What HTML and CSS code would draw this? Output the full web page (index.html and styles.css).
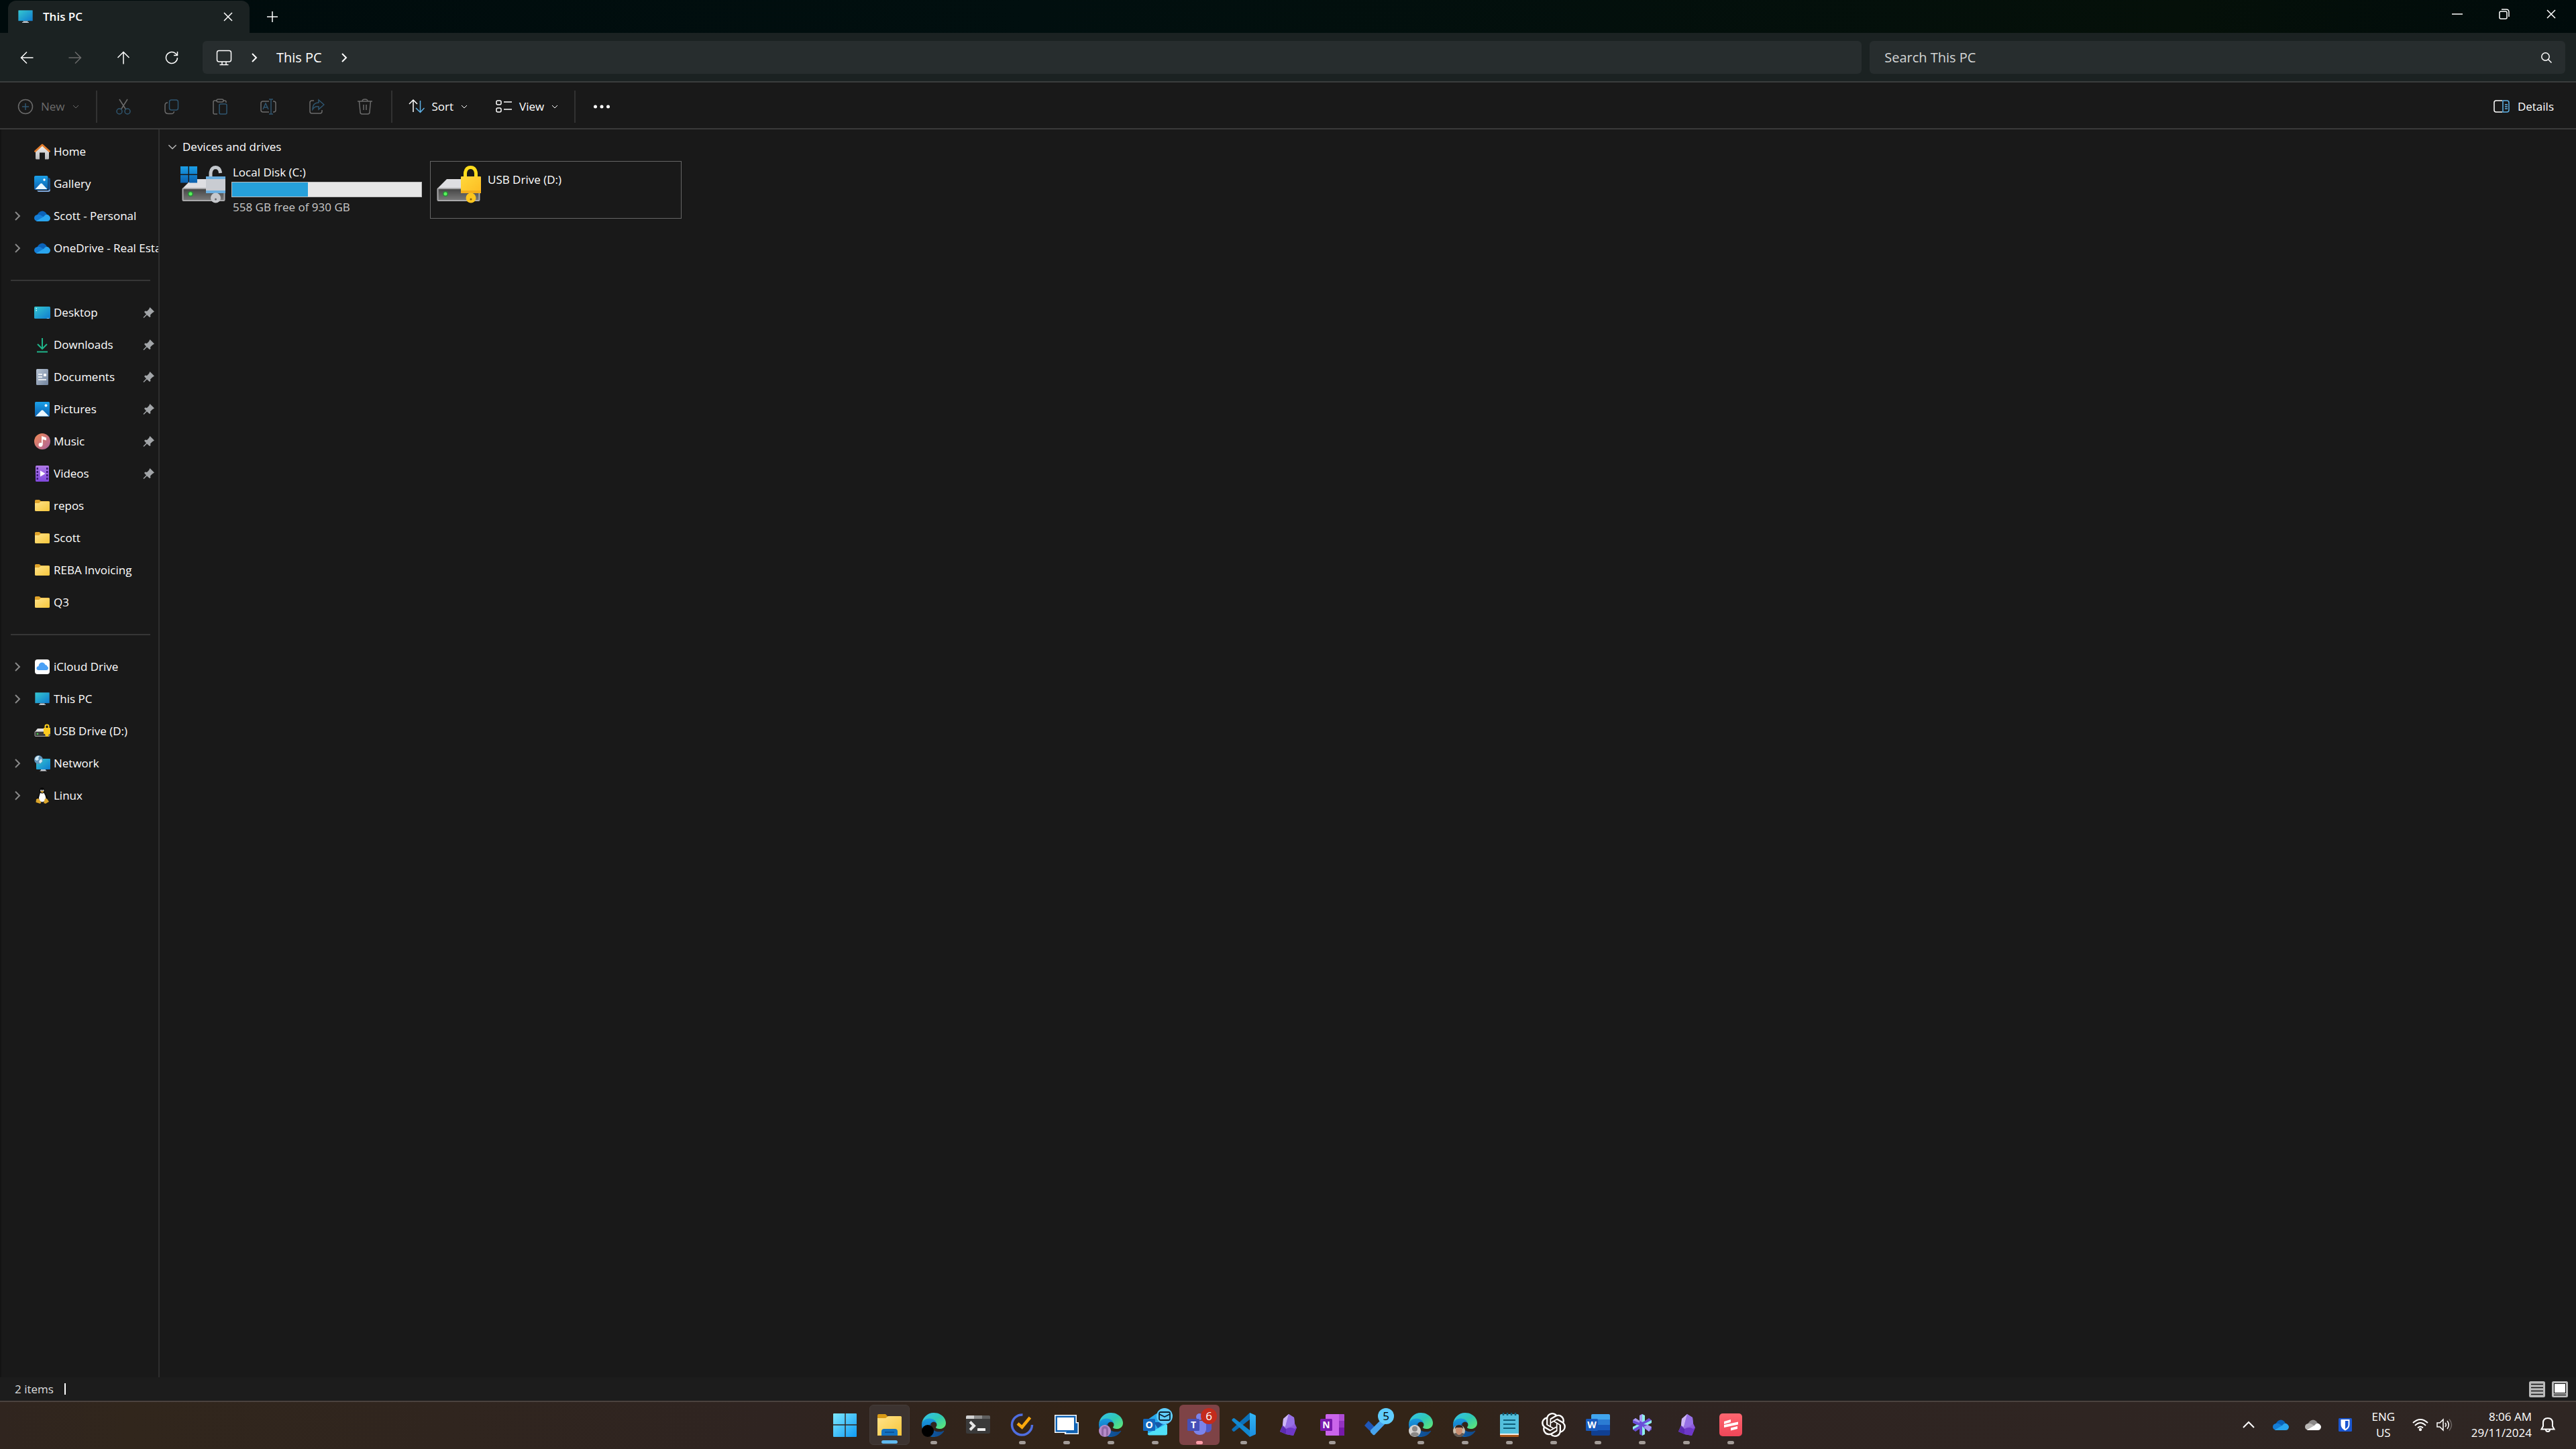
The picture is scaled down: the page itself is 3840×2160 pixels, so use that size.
FILE: index.html
```html
<!DOCTYPE html>
<html lang="en">
<head>
    <meta charset="UTF-8">
    <meta name="viewport" content="width=device-width, initial-scale=1.0">
    <title>This PC</title>
    <link rel="stylesheet" href="styles.css">
</head>
<body>
    <header class="titlebar">
        <div class="tab">
            <svg class="icon"><use href="#pc"/></svg>
            <span class="tab-title">This PC</span>
            <button class="tab-close" aria-label="Close tab"><svg class="glyph"><use href="#close"/></svg></button>
        </div>
        <button class="tab-new" aria-label="New tab"><svg class="glyph"><use href="#plus"/></svg></button>
        <div class="window-buttons">
            <button aria-label="Minimize"><svg class="glyph"><use href="#minimize"/></svg></button>
            <button aria-label="Restore"><svg class="glyph"><use href="#restore"/></svg></button>
            <button aria-label="Close"><svg class="glyph"><use href="#close"/></svg></button>
        </div>
    </header>

    <div class="navbar">
        <button class="nav-button" aria-label="Back"><svg class="icon"><use href="#back"/></svg></button>
        <button class="nav-button off" aria-label="Forward"><svg class="icon flip"><use href="#back"/></svg></button>
        <button class="nav-button" aria-label="Up"><svg class="icon"><use href="#up"/></svg></button>
        <button class="nav-button" aria-label="Refresh"><svg class="icon"><use href="#refresh"/></svg></button>
        <nav class="address" aria-label="Address">
            <svg class="address-icon"><use href="#monitor"/></svg>
            <svg class="crumb-arrow"><use href="#right"/></svg>
            <a href="#">This PC</a>
            <svg class="crumb-arrow"><use href="#right"/></svg>
        </nav>
        <form class="search">
            <input type="text" placeholder="Search This PC" aria-label="Search This PC">
            <button type="button" aria-label="Search"><svg class="glyph"><use href="#search"/></svg></button>
        </form>
    </div>

    <div class="toolbar">
        <button class="tool tool-new off"><svg class="icon"><use href="#new"/></svg>New<svg class="caret"><use href="#down"/></svg></button>
        <span class="divider"></span>
        <button class="tool-icon off" aria-label="Cut"><svg class="icon"><use href="#cut"/></svg></button>
        <button class="tool-icon off" aria-label="Copy"><svg class="icon"><use href="#copy"/></svg></button>
        <button class="tool-icon off" aria-label="Paste"><svg class="icon"><use href="#paste"/></svg></button>
        <button class="tool-icon off" aria-label="Rename"><svg class="icon"><use href="#rename"/></svg></button>
        <button class="tool-icon off" aria-label="Share"><svg class="icon"><use href="#share"/></svg></button>
        <button class="tool-icon off" aria-label="Delete"><svg class="icon"><use href="#delete"/></svg></button>
        <span class="divider"></span>
        <button class="tool"><svg class="icon"><use href="#sort"/></svg>Sort<svg class="caret"><use href="#down"/></svg></button>
        <button class="tool"><svg class="icon"><use href="#view"/></svg>View<svg class="caret"><use href="#down"/></svg></button>
        <span class="divider"></span>
        <button class="tool-icon" aria-label="See more"><svg class="icon"><use href="#more"/></svg></button>
        <button class="tool tool-details"><svg class="icon"><use href="#details"/></svg>Details</button>
    </div>

    <div class="main">
        <aside class="sidebar">
            <a class="item" href="#"><span class="arrow"></span><svg class="icon"><use href="#home"/></svg><span class="name">Home</span></a>
            <a class="item" href="#"><span class="arrow"></span><svg class="icon"><use href="#gallery"/></svg><span class="name">Gallery</span></a>
            <a class="item" href="#"><svg class="arrow"><use href="#right"/></svg><svg class="icon"><use href="#onedrive"/></svg><span class="name">Scott - Personal</span></a>
            <a class="item" href="#"><svg class="arrow"><use href="#right"/></svg><svg class="icon"><use href="#onedrive"/></svg><span class="name">OneDrive - Real Estate</span></a>
            <hr>
            <a class="item" href="#"><span class="arrow"></span><svg class="icon"><use href="#desktop"/></svg><span class="name">Desktop</span><svg class="pin"><use href="#pin"/></svg></a>
            <a class="item" href="#"><span class="arrow"></span><svg class="icon"><use href="#downloads"/></svg><span class="name">Downloads</span><svg class="pin"><use href="#pin"/></svg></a>
            <a class="item" href="#"><span class="arrow"></span><svg class="icon"><use href="#documents"/></svg><span class="name">Documents</span><svg class="pin"><use href="#pin"/></svg></a>
            <a class="item" href="#"><span class="arrow"></span><svg class="icon"><use href="#pictures"/></svg><span class="name">Pictures</span><svg class="pin"><use href="#pin"/></svg></a>
            <a class="item" href="#"><span class="arrow"></span><svg class="icon"><use href="#music"/></svg><span class="name">Music</span><svg class="pin"><use href="#pin"/></svg></a>
            <a class="item" href="#"><span class="arrow"></span><svg class="icon"><use href="#videos"/></svg><span class="name">Videos</span><svg class="pin"><use href="#pin"/></svg></a>
            <a class="item" href="#"><span class="arrow"></span><svg class="icon"><use href="#folder"/></svg><span class="name">repos</span></a>
            <a class="item" href="#"><span class="arrow"></span><svg class="icon"><use href="#folder"/></svg><span class="name">Scott</span></a>
            <a class="item" href="#"><span class="arrow"></span><svg class="icon"><use href="#folder"/></svg><span class="name">REBA Invoicing</span></a>
            <a class="item" href="#"><span class="arrow"></span><svg class="icon"><use href="#folder"/></svg><span class="name">Q3</span></a>
            <hr>
            <a class="item" href="#"><svg class="arrow"><use href="#right"/></svg><svg class="icon"><use href="#icloud"/></svg><span class="name">iCloud Drive</span></a>
            <a class="item" href="#"><svg class="arrow"><use href="#right"/></svg><svg class="icon"><use href="#pc"/></svg><span class="name">This PC</span></a>
            <a class="item" href="#"><span class="arrow"></span><svg class="icon"><use href="#usb"/></svg><span class="name">USB Drive (D:)</span></a>
            <a class="item" href="#"><svg class="arrow"><use href="#right"/></svg><svg class="icon"><use href="#network"/></svg><span class="name">Network</span></a>
            <a class="item" href="#"><svg class="arrow"><use href="#right"/></svg><svg class="icon"><use href="#linux"/></svg><span class="name">Linux</span></a>
        </aside>

        <main class="content">
            <button class="group"><svg class="group-arrow"><use href="#down"/></svg>Devices and drives</button>
            <div class="drives">
                <a class="drive" href="#">
                    <svg class="drive-icon"><use href="#drive-c"/></svg>
                    <div class="drive-info">
                        <label for="space">Local Disk (C:)</label>
                        <progress id="space" max="930" value="372"></progress>
                        <span class="free">558 GB free of 930 GB</span>
                    </div>
                </a>
                <a class="drive focused" href="#">
                    <svg class="drive-icon"><use href="#drive-d"/></svg>
                    <div class="drive-info single">USB Drive (D:)</div>
                </a>
            </div>
        </main>
    </div>

    <div class="statusbar">
        <span>2 items</span>
        <span class="status-mark"></span>
        <div class="layouts">
            <button aria-label="Details view"><svg class="icon"><use href="#list"/></svg></button>
            <button aria-label="Large icons"><svg class="icon"><use href="#large"/></svg></button>
        </div>
    </div>

    <footer class="taskbar">
        <div class="apps">
            <button class="app" aria-label="Start"><svg><use href="#start"/></svg></button>
            <button class="app running active" aria-label="File Explorer"><svg><use href="#explorer"/></svg></button>
            <button class="app running" aria-label="Edge"><svg><use href="#edge"/><circle cx="9" cy="27" r="9"/></svg></button>
            <button class="app" aria-label="Terminal"><svg><use href="#terminal"/></svg></button>
            <button class="app running" aria-label="TickTick"><svg><use href="#ticktick"/></svg></button>
            <button class="app running" aria-label="Remote Desktop"><svg><use href="#remote"/></svg></button>
            <button class="app running" aria-label="Edge, profile 2"><svg><use href="#edge"/><circle cx="9" cy="27" r="9" fill="#b58bc8"/><path d="M4 33V25Q4 20 9 20Q14 20 14 25V33L11 35V25L9 23 7 25V35Z" fill="#8f68a5"/></svg></button>
            <button class="app running" aria-label="Outlook"><svg><use href="#outlook"/><text class="letter" x="9" y="23">O</text></svg><span class="badge"><svg><use href="#envelope"/></svg></span></button>
            <button class="app running alert" aria-label="Teams"><svg><use href="#teams"/><text class="letter" x="9" y="23">T</text></svg><span class="badge red">6</span></button>
            <button class="app running" aria-label="Visual Studio Code"><svg><use href="#vscode"/></svg></button>
            <button class="app" aria-label="Obsidian"><svg><use href="#obsidian"/></svg></button>
            <button class="app running" aria-label="OneNote"><svg><use href="#onenote"/><text class="letter" x="9" y="23">N</text></svg></button>
            <button class="app" aria-label="To Do"><svg><use href="#todo"/></svg><span class="badge">5</span></button>
            <button class="app running" aria-label="Edge, profile 3"><svg><use href="#edge"/><circle cx="9" cy="27" r="9" fill="#d4d2d0"/><circle cx="9" cy="24" r="4" fill="#8a8886"/><path d="M3 33Q3 29 9 29Q15 29 15 33Q9 38 3 33Z" fill="#8a8886"/></svg></button>
            <button class="app running" aria-label="Edge, profile 4"><svg><use href="#edge"/><circle cx="9" cy="27" r="9" fill="#c9bca9"/><path d="M1 31Q9 28 17 31Q15 36 9 36Q3 36 1 31Z" fill="#625a54"/><ellipse cx="9" cy="26" rx="5" ry="7" fill="#c98e70"/><path d="M3 24Q3 18 9 18Q15 18 15 24L13 22H5Z" fill="#33241d"/></svg></button>
            <button class="app running" aria-label="Notepad"><svg><use href="#notepad"/></svg></button>
            <button class="app running" aria-label="ChatGPT"><svg><use href="#chatgpt"/></svg></button>
            <button class="app running" aria-label="Word"><svg><use href="#word"/><text class="letter" x="9" y="23">W</text></svg></button>
            <button class="app running" aria-label="Crystal"><svg><use href="#crystal"/></svg></button>
            <button class="app running" aria-label="Obsidian, window 2"><svg><use href="#obsidian"/></svg></button>
            <button class="app running" aria-label="Stripes"><svg><use href="#stripes"/></svg></button>
        </div>
        <div class="tray">
            <button class="tray-button" aria-label="Show hidden icons"><svg class="icon"><use href="#chevron-up"/></svg></button>
            <button class="tray-button" aria-label="OneDrive"><svg class="icon"><use href="#onedrive"/></svg></button>
            <button class="tray-button" aria-label="OneDrive, signed out"><svg class="icon"><use href="#cloud-gray"/></svg></button>
            <button class="tray-button" aria-label="Bitwarden"><svg class="icon"><use href="#shield"/></svg></button>
            <button class="language">ENG<br>US</button>
            <button class="sound" aria-label="Network and volume"><svg class="icon"><use href="#wifi"/></svg><svg class="icon"><use href="#volume"/></svg></button>
            <button class="clock"><span>8:06 AM<br>29/11/2024</span><svg class="icon"><use href="#bell"/></svg></button>
        </div>
    </footer>

    <svg class="sprite" aria-hidden="true">
        <defs>
            <linearGradient id="g-screen" x1="0" y1="0" x2="1" y2="1"><stop offset="0" stop-color="#35c8d0"/><stop offset="1" stop-color="#0f7bd0"/></linearGradient>
            <linearGradient id="g-blue" x1="0" y1="0" x2="0" y2="1"><stop offset="0" stop-color="#1ba0e8"/><stop offset="1" stop-color="#0a5fae"/></linearGradient>
            <linearGradient id="g-win" x1="0" y1="0" x2="1" y2="1"><stop offset="0" stop-color="#7de8ff"/><stop offset="1" stop-color="#0f9bf5"/></linearGradient>
            <linearGradient id="g-folder" x1="0" y1="0" x2="1" y2="1"><stop offset="0" stop-color="#ffe38a"/><stop offset="1" stop-color="#f6c63c"/></linearGradient>
            <linearGradient id="g-gray" x1="0" y1="0" x2="0" y2="1"><stop offset="0" stop-color="#f4f4f4"/><stop offset="1" stop-color="#b8b8ba"/></linearGradient>
            <linearGradient id="g-music" x1="0" y1="0" x2="1" y2="1"><stop offset="0" stop-color="#f08a56"/><stop offset="1" stop-color="#a8609c"/></linearGradient>
            <linearGradient id="g-video" x1="0" y1="0" x2="0" y2="1"><stop offset="0" stop-color="#b07ae8"/><stop offset="1" stop-color="#8048dc"/></linearGradient>
            <linearGradient id="g-front" x1="0" y1="0" x2="0" y2="1"><stop offset="0" stop-color="#444"/><stop offset="1" stop-color="#7a7a7a"/></linearGradient>
            <linearGradient id="g-lock" x1="0" y1="0" x2="1" y2="1"><stop offset="0" stop-color="#ffd83a"/><stop offset="1" stop-color="#fdbb22"/></linearGradient>
            <linearGradient id="g-edge1" x1="0" y1="0" x2="1" y2="0"><stop offset="0" stop-color="#0c59a4"/><stop offset="1" stop-color="#114a8b"/></linearGradient>
            <linearGradient id="g-edge2" x1="0" y1="0" x2="0" y2="1"><stop offset="0" stop-color="#1b9de2"/><stop offset="1" stop-color="#0a64b4"/></linearGradient>
            <linearGradient id="g-edge3" x1="0" y1="0" x2="1" y2="1"><stop offset="0" stop-color="#35c1f1"/><stop offset=".5" stop-color="#2fc8b4"/><stop offset="1" stop-color="#66eb6e"/></linearGradient>
            <linearGradient id="g-obs" x1="0" y1="0" x2="1" y2="1"><stop offset="0" stop-color="#b79af0"/><stop offset="1" stop-color="#7a3fd4"/></linearGradient>
            <linearGradient id="g-doc" x1="0" y1="0" x2="1" y2="1"><stop offset="0" stop-color="#b8c4d4"/><stop offset="1" stop-color="#72849e"/></linearGradient>
            <linearGradient id="g-code" x1="0" y1="0" x2="0" y2="1"><stop offset="0" stop-color="#32b5f4"/><stop offset="1" stop-color="#1b8ee0"/></linearGradient>
            <linearGradient id="g-red" x1="0" y1="0" x2="0" y2="1"><stop offset="0" stop-color="#ff6670"/><stop offset="1" stop-color="#ee4658"/></linearGradient>
        </defs>

        <!-- line glyphs -->
        <symbol id="close" viewBox="0 0 16 16"><path class="line" d="M2 2 14 14M14 2 2 14"/></symbol>
        <symbol id="plus" viewBox="0 0 16 16"><path class="line" d="M8 0V16M0 8H16"/></symbol>
        <symbol id="minimize" viewBox="0 0 16 16"><path class="line" d="M0 8H16"/></symbol>
        <symbol id="restore" viewBox="0 0 16 16"><rect class="line" x="1" y="4" width="11" height="11" rx="2"/><path class="line" d="M4 1H11Q15 1 15 5V12"/></symbol>
        <symbol id="search" viewBox="0 0 16 16"><circle class="line" cx="6.5" cy="6.5" r="5.7"/><path class="line" d="M10.5 10.5 15.5 15.5"/></symbol>
        <symbol id="back" viewBox="0 0 24 24"><path class="line" d="M12 3.5 3.5 12 12 20.5M3.5 12H21.5"/></symbol>
        <symbol id="up" viewBox="0 0 24 24"><path class="line" d="M3.5 12 12 3.5 20.5 12M12 3.5V21.5"/></symbol>
        <symbol id="refresh" viewBox="0 0 24 24"><path class="line" d="M20.5 12A8.5 8.5 0 1 1 17.5 5.5L20.5 8.5M20.5 3V8.5H15"/></symbol>
        <symbol id="monitor" viewBox="0 0 24 24"><rect class="line" x="1.5" y="1.5" width="21" height="16.5" rx="3"/><path class="line" d="M9 18V22M15 18V22M5.5 22.5H18.5"/></symbol>
        <symbol id="right" viewBox="0 0 12 16"><path class="bold" d="M3 2 9 8 3 14"/></symbol>
        <symbol id="down" viewBox="0 0 10 10"><path class="line thin" d="M1 3 5 7 9 3"/></symbol>
        <symbol id="chevron-up" viewBox="0 0 24 24"><path class="bold" d="M4 16 12 8 20 16"/></symbol>
        <symbol id="new" viewBox="0 0 24 24"><circle class="line" cx="12" cy="12" r="10.5"/><path class="line accent" d="M12 7V17M7 12H17"/></symbol>
        <symbol id="cut" viewBox="0 0 24 24"><path class="line" d="M6 1 15.5 16M18 1 8.5 16"/><circle class="line accent" cx="6" cy="19" r="4"/><circle class="line accent" cx="18" cy="19" r="4"/></symbol>
        <symbol id="copy" viewBox="0 0 24 24"><path class="line" d="M6 6Q2 6 2 10V18Q2 22.5 7 22.5H12Q15 22.5 15.5 19"/><rect class="line accent" x="8.5" y="2" width="13" height="15" rx="3"/></symbol>
        <symbol id="paste" viewBox="0 0 24 24"><path class="line" d="M7 3H4Q2 3 2 5V21Q2 23 4 23H8M17 3H19Q21 3 21 5V6"/><rect class="line" x="7" y="1" width="10" height="4" rx="2"/><rect class="line accent" x="11" y="8" width="11" height="15" rx="2"/></symbol>
        <symbol id="rename" viewBox="0 0 24 24"><path class="line" d="M13 4H4Q1 4 1 7V17Q1 20 4 20H13M19 4H20Q23 4 23 7V17Q23 20 20 20H19"/><path class="line accent" d="M4 16 8 7 12 16M5.5 13H10.5M16 1V23M13 1H19M13 23H19"/></symbol>
        <symbol id="share" viewBox="0 0 24 24"><path class="line" d="M8 3H5Q2 3 2 6V19Q2 22 5 22H17Q20 22 20 19V17"/><path class="line accent" d="M15 2 23 9 15 16V12Q9 11 6 16Q6 6 15 6Z"/></symbol>
        <symbol id="delete" viewBox="0 0 24 24"><path class="line" d="M1 4H23M8 4Q8 1 12 1Q16 1 16 4M3.5 4 5 20Q5 23 8 23H16Q19 23 19 20L20.5 4M10 9V17M14 9V17"/></symbol>
        <symbol id="sort" viewBox="0 0 24 24"><path class="line" d="M1 8 7 2 13 8M7 2V20"/><path class="line accent" d="M17.5 3V20M11 14 17.5 20.5 23.5 14"/></symbol>
        <symbol id="view" viewBox="0 0 24 24"><rect class="line" x="1" y="3" width="7" height="6" rx="2"/><rect class="line" x="1" y="14" width="7" height="6" rx="2"/><path class="line" d="M12 5H24M12 16H24"/></symbol>
        <symbol id="more" viewBox="0 0 24 24"><circle cx="2.5" cy="12" r="2.5" fill="#fff"/><circle cx="12" cy="12" r="2.5" fill="#fff"/><circle cx="21.5" cy="12" r="2.5" fill="#fff"/></symbol>
        <symbol id="details" viewBox="0 0 24 24"><path class="line" d="M13 3H4Q1 3 1 6V17Q1 20 4 20H13"/><path class="line accent" d="M14 3H20Q23 3 23 6V17Q23 20 20 20H14ZM17 9H21M17 12H21M17 15H21"/></symbol>
        <symbol id="pin" viewBox="0 0 18 18"><path fill="#a2a5a8" d="M10.500 1 17 7.500 14 9.500 11 12.500 11.500 15 10 16 6 12.500 1.500 17 .5 16 5 11.500 2 8 3.500 6.500 6 7 9 4Z"/></symbol>
        <symbol id="wifi" viewBox="0 0 24 24"><path class="bold" d="M1 9Q12-1 23 9M4 13Q12 5 20 13M8 16.5Q12 13 16 16.5"/><circle cx="12" cy="19" r="2.2" fill="#fff"/></symbol>
        <symbol id="volume" viewBox="0 0 24 24"><path class="line" d="M1 9H5L10 4V20L5 15H1Z"/><path class="line" d="M13 9Q15.500 12 13 15M16 6Q20.500 12 16 18"/><path class="line dim" d="M19 3.500Q26 12 19 20.500"/></symbol>
        <symbol id="bell" viewBox="0 0 24 24"><path class="bold" d="M2.500 18.500 5 14V9Q5 2 12 2Q19 2 19 9V14L21.500 18.500ZM9 19Q9 22 12 22Q15 22 15 19"/></symbol>
        <symbol id="envelope" viewBox="0 0 24 24"><rect x="4" y="6" width="16" height="12" rx="2" fill="none" stroke="#0c2233" stroke-width="1.8"/><path d="M4 9 12 13 20 9" fill="none" stroke="#0c2233" stroke-width="1.8"/></symbol>

        <!-- sidebar -->
        <symbol id="home" viewBox="0 0 24 24"><path fill="url(#g-gray)" d="M2 10 12 2 22 10V22Q22 23.500 20.500 23.500H16V13.500H8V23.500H3.500Q2 23.500 2 22Z"/><path fill="none" stroke="#e07b2c" stroke-width="2.8" stroke-linecap="round" stroke-linejoin="round" d="M1.500 11.500 12 2 22.500 11.500"/></symbol>
        <symbol id="gallery" viewBox="0 0 24 24"><path fill="#7ea6d8" d="M4 22H21V4Q24 4 24 6V21Q24 24 21 24H6Z"/><path fill="#174f8c" d="M21 3Q24 3 24 6V20L21 22Z"/><rect width="20.5" height="21" rx="2" fill="url(#g-blue)"/><path fill="#e8f6ff" d="M1.500 20 9 12Q10.500 10.500 12 12L19.500 20Z"/><circle cx="15" cy="6" r="1.7" fill="#fff"/></symbol>
        <symbol id="onedrive" viewBox="0 0 24 24"><path fill="#0b62b8" d="M4 12Q6 5 12 4.500Q17 5 19 10L10 17Q3 17 4 12Z"/><path fill="#147dd6" d="M4.500 10Q8 9 12 12L17 15 10 20H5Q0 19 0 15Q0 11 4.500 10Z"/><path fill="#2aa5ee" d="M3 19.500 14 13Q17 9 20 10Q24 12 24 15.500Q23 20 19 20H5Q3.500 20 3 19.500Z"/></symbol>
        <symbol id="cloud-gray" viewBox="0 0 24 24"><path fill="#8c8988" d="M4 12Q6 5 12 4.500Q17 5 19 10L10 17Q3 17 4 12Z"/><path fill="#b9b6b4" d="M4.500 10Q8 9 12 12L17 15 10 20H5Q0 19 0 15Q0 11 4.500 10Z"/><path fill="#fff" d="M3 19.500 14 13Q17 9 20 10Q24 12 24 15.500Q23 20 19 20H5Q3.500 20 3 19.500Z"/></symbol>
        <symbol id="desktop" viewBox="0 0 24 24"><rect y="3" width="24" height="18" rx="1.5" fill="url(#g-screen)"/><path fill="#d8f8ff" d="M2.500 5H4V6.500H2.500ZM2.500 8H4V9.500H2.500ZM19 20H20V21H19ZM21 20H22V21H21Z"/></symbol>
        <symbol id="downloads" viewBox="0 0 24 24"><path fill="none" stroke="#1fb489" stroke-width="2" d="M12 2V18M5 11 12 18 19 11M4 22.500H20"/></symbol>
        <symbol id="documents" viewBox="0 0 24 24"><rect x="3" width="18" height="24" rx="1.5" fill="url(#g-doc)"/><path stroke="#fff" stroke-width="1.3" d="M6 8H12M6 12H12M6 16H18"/><rect x="14" y="7" width="4" height="4" rx="1" fill="#fff"/></symbol>
        <symbol id="pictures" viewBox="0 0 24 24"><rect x="1" y="1" width="22" height="22" rx="1.5" fill="url(#g-blue)"/><path fill="#eaf7ff" d="M2 22.500 10.500 14Q12 12.500 13.500 14L22 22.500Z"/><circle cx="17.5" cy="6.5" r="2" fill="#fff"/></symbol>
        <symbol id="music" viewBox="0 0 24 24"><circle cx="12" cy="12" r="12" fill="url(#g-music)"/><circle cx="9.5" cy="17" r="3" fill="#fff"/><path fill="#fff" d="M11 17V4L18 6.500V10.500L12.700 9V17Z"/></symbol>
        <symbol id="videos" viewBox="0 0 24 24"><rect x="2" width="20" height="24" rx="1.5" fill="url(#g-video)"/><path fill="#3c1a78" d="M3.500 3H6V6H3.500ZM3.500 8H6V11H3.500ZM3.500 13H6V16H3.500ZM3.500 18H6V21H3.500ZM18 3H20.500V6H18ZM18 8H20.500V11H18ZM18 13H20.500V16H18ZM18 18H20.500V21H18Z"/><path fill="#fff" d="M9 7.500 16.500 12 9 16.500Z"/></symbol>
        <symbol id="folder" viewBox="0 0 24 24"><path fill="#dfa32a" d="M1 4.500Q1 3 2.500 3H7.500L10 5H21Q23 5 23 7V12H1Z"/><path fill="url(#g-folder)" d="M1 8H7L10 5.500H22Q23 5.500 23 6.500V18.500Q23 20 21.500 20H2.500Q1 20 1 18.500Z"/></symbol>
        <symbol id="icloud" viewBox="0 0 24 24"><rect x="1" y="1" width="22" height="22" rx="4" fill="#fff"/><path fill="#4aa0f5" d="M7 17Q3 17 3.500 13.500Q4 11 6.500 11Q7 6 11.500 5.500Q15 5.500 16.500 9Q19 9 19.500 11.500Q21.500 12.500 21 14.500Q20.500 17 18 17Z"/></symbol>
        <symbol id="pc" viewBox="0 0 24 24"><rect x="1" y="2" width="22" height="16.5" rx="1" fill="#2a4a5c"/><rect x="1.5" y="2.5" width="21" height="15.5" rx=".5" fill="url(#g-screen)"/><path fill="#c2cad2" d="M8 18.500H16L15 20H17V21H7V20H9Z"/></symbol>
        <symbol id="usb" viewBox="0 0 24 24"><path fill="#e2e2e2" d="M5 8H17L23 13H1Z"/><rect x="1" y="12.5" width="22" height="7" rx="1" fill="#3c3c3c" stroke="#a8a8a8"/><circle cx="5" cy="16" r="1.3" fill="#46d24a"/><path fill="none" stroke="#ffd21e" stroke-width="2" d="M16.500 8V4.500Q16.500 2.500 19 2.500Q21.500 2.500 21.500 4.500V8"/><path fill="#fdca20" d="M14 7H24V16H22L21 20H17L16 16H14Z"/></symbol>
        <symbol id="network" viewBox="0 0 24 24"><rect x="3" y="5" width="21" height="16" rx="1" fill="url(#g-screen)"/><path fill="#c2cad2" d="M10 21H17V22L19 23.500H8L10 22Z"/><circle cx="6.5" cy="6.5" r="6.5" fill="#5f95bb"/><path fill="#cfe6f2" d="M2 3Q5 0 8 1L6 4 7 6 4 8 1 6ZM8 7 11 5 12 9 9 12 7 10Z"/></symbol>
        <symbol id="linux" viewBox="0 0 24 24"><path fill="#090909" d="M8 5Q8 0 11.500 0Q15.500 0 15.500 5Q15.500 8 18.500 12Q21 16 19.500 20L16 22H8L4 19Q4 14 7 11Q8.500 8 8 5Z"/><path fill="#fff" d="M9 8Q12 9.500 14.500 8Q17 12 17.500 16Q17 21 12 21.500Q7 21 7 15Q8 11 9 8Z"/><circle cx="10.3" cy="4.5" r="1.2" fill="#ddd"/><circle cx="13.3" cy="4.5" r="1.2" fill="#ddd"/><path fill="#dba52a" d="M9 6 12 5 14.500 6 12 8ZM3 17.500 6 16 10.500 22 9 24 2.500 22ZM16 16.500 19 16.500 22 21 17 24 14 23Z"/></symbol>

        <!-- drives -->
        <symbol id="disk" viewBox="0 0 66 56"><path fill="#dedee2" d="M15 20H52L64 34H1Z"/><rect x="1.5" y="34" width="62" height="18" rx="1" fill="url(#g-front)" stroke="#a9a9ab" stroke-width="2"/><circle cx="13" cy="42" r="4" fill="#2a8a3a"/><circle cx="13" cy="42" r="2.5" fill="#5af25a"/></symbol>
        <symbol id="drive-c" viewBox="0 0 70 56"><use href="#disk" x="4" y="0" width="66" height="56"/><path fill="url(#g-blue)" d="M2 1H13.500V12.500H2ZM15 1H27V12.500H15ZM2 14H13.500V25.500H2ZM15 14H27V25.500H15Z"/><path fill="none" stroke="#c3c7cc" stroke-width="5" d="M47 17V11Q48 2.500 54.500 2.500Q61 3 61.500 11"/><rect x="40" y="16" width="29" height="25" rx="1" fill="#c9ccd2"/><path fill="#6aaee0" d="M40 16H69V20H40ZM40 37H69V41H40Z"/><circle cx="54.500" cy="48" r="7.5" fill="#c6c8cc"/><circle cx="54.500" cy="50" r="1.5" fill="#66686c"/></symbol>
        <symbol id="drive-d" viewBox="0 0 70 56"><use href="#disk" x="3" y="0" width="66" height="56"/><path fill="none" stroke="#ffdd1c" stroke-width="5" d="M45.500 17V11Q46.500 2.500 53.500 2.500Q60.500 2.500 61.500 11V17"/><rect x="39" y="16" width="30" height="25" rx="1" fill="url(#g-lock)"/><path fill="#f4ae1c" d="M39 37H69V41H39Z"/><circle cx="54" cy="48" r="7.5" fill="#fcc51e"/><circle cx="54" cy="50" r="1.5" fill="#7a5a10"/></symbol>

        <!-- status bar -->
        <symbol id="list" viewBox="0 0 24 24"><rect width="24" height="24" rx="2.5" fill="#b9b9b9"/><path stroke="#111" stroke-width="1.3" d="M3 4.500H21M3 9.500H21M3 14.500H21M3 19.500H21"/></symbol>
        <symbol id="large" viewBox="0 0 24 24"><rect width="24" height="24" rx="2.5" fill="#b9b9b9"/><rect x="3.5" y="3.5" width="17" height="14" fill="#fff" stroke="#111"/><path stroke="#111" stroke-width="1.3" d="M3 20.500H21"/></symbol>

        <!-- taskbar -->
        <symbol id="start" viewBox="0 0 36 36"><path fill="url(#g-win)" d="M1 1H17.300V17.300H0V2Q0 1 1 1ZM18.700 1H34Q35 1 35 2V17.300H18.700ZM0 18.700H17.300V36H1Q0 36 0 35ZM18.700 18.700H35V35Q35 36 34 36H18.700Z"/></symbol>
        <symbol id="explorer" viewBox="0 0 36 36"><path fill="#d89a16" d="M0 4Q0 2 2 2H12L16 6H34V14H0Z"/><path fill="url(#g-folder)" d="M0 8H12L16 5H34.500Q36 5 36 6.500V34H0Z"/><path fill="#1472c0" d="M6 34V28Q6 24 10 24H26Q30 24 30 28V34Z"/><path stroke="#0a4a88" stroke-width="1.5" d="M11 29H25"/></symbol>
        <symbol id="edge" viewBox="0 0 256 256"><path fill="url(#g-edge1)" d="M231.05 190.54c-3.42 1.78-6.94 3.35-10.54 4.71a101.92 101.92 0 0 1-35.89 6.46c-47.3 0-88.51-32.54-88.51-74.31a31.47 31.47 0 0 1 16.43-27.31c-42.8 1.8-53.8 46.4-53.8 72.53 0 73.88 68.09 81.37 82.76 81.37 7.91 0 19.84-2.3 27-4.56l1.31-.44a128.34 128.34 0 0 0 66.6-52.8 4 4 0 0 0-5.36-5.65z"/><path fill="url(#g-edge2)" d="M105.73 241.42a79.21 79.21 0 0 1-22.74-21.34 80.72 80.72 0 0 1 29.53-120c3.12-1.47 8.45-4.13 15.54-4a32.35 32.35 0 0 1 25.69 13 31.88 31.88 0 0 1 6.36 18.66c0-.21 24.46-79.6-80-79.6-43.9 0-80 41.66-80 78.21a130.15 130.15 0 0 0 12.11 56 128 128 0 0 0 156.38 67.11 75.55 75.55 0 0 1-62.78-8z"/><path fill="url(#g-edge3)" d="M152.33 148.86c-.81 1.05-3.3 2.5-3.3 5.66 0 2.61 1.7 5.12 4.72 7.23 14.38 10 41.49 8.68 41.56 8.68a59.56 59.56 0 0 0 30.27-8.35 61.38 61.38 0 0 0 30.43-52.88c.26-22.41-8-37.31-11.34-43.91C223.46 23.84 177.72 0 128 0A128 128 0 0 0 0 126.2c.48-36.54 36.8-66.05 80-66.05 3.5 0 23.46.34 42 10.07 16.34 8.58 24.9 18.94 30.85 29.21 6.18 10.67 7.28 24.15 7.28 29.52s-2.74 13.33-7.8 19.91z"/></symbol>
        <symbol id="terminal" viewBox="0 0 36 36"><rect y="4" width="36" height="27" rx="2" fill="#3a3a3a"/><path fill="#d2d2d2" d="M2 4H12V9H0V6Q0 4 2 4Z"/><path fill="#8e8e8e" d="M12 4H24V9H12Z"/><path fill="#5f5f5f" d="M24 4H34Q36 4 36 6V9H24Z"/><path fill="none" stroke="#e6e6e6" stroke-width="4" d="M6 13.500 12 19.500 6 25.500"/><rect x="17" y="23" width="12" height="4" rx=".5" fill="#f2f2f2"/></symbol>
        <symbol id="ticktick" viewBox="0 0 36 36"><path fill="none" stroke="#4f6ee0" stroke-width="3.5" d="M18.500 3A15 15 0 1 0 32.500 18"/><path fill="none" stroke="#f9a80c" stroke-width="4.5" d="M11 16 17.500 21.500 29.500 7"/></symbol>
        <symbol id="remote" viewBox="0 0 36 36"><path fill="#fff" d="M0 3H33V14H36V32H15V30H0Z"/><path fill="#0f62b4" d="M1.500 4.500H31.500V15.500H34.500V30.500H16.500L18 28.500H1.500Z"/><path fill="#fff" d="M4 7H29V26H4Z"/></symbol>
        <symbol id="outlook" viewBox="0 0 36 36"><path fill="#28a8ea" d="M7 10 20 1 34 12V31Q34 33 32 33H9Q6 33 7 30Z"/><path fill="#1458a8" d="M16 14H33L22 23Z"/><path fill="#50e0f8" d="M7 31 34 17Q36 17 36 19V31Q36 33.500 33 33.500H9Q7 33.500 7 31Z"/><rect y="9" width="18" height="18" rx="1.5" fill="#1268be"/></symbol>
        <symbol id="teams" viewBox="0 0 36 36"><circle cx="18" cy="6" r="5" fill="#7b83eb"/><circle cx="30" cy="9" r="4" fill="#5059c9"/><path fill="#5059c9" d="M24 14H36V24Q35 30 28 29Z"/><path fill="#7b83eb" d="M9 12H28V25Q27 33 18.500 33Q11 33 9 26Z"/><rect y="9" width="18" height="18" rx="1.5" fill="#4650b8"/></symbol>
        <symbol id="vscode" viewBox="0 0 36 36"><path fill="#0b70b8" d="M27 0 36 4 27 10 4.500 27.500Q3 28.500 2 27.500L.5 26Q0 25 .8 24Z"/><path fill="#1288d0" d="M27 36V26L4.500 8.500Q3 7.500 2 8.500L.5 10Q0 11 .8 12Z"/><path fill="url(#g-code)" d="M27 0 35 3.500Q36 4 36 5V31Q36 32 35 32.500L27 36Z"/></symbol>
        <symbol id="obsidian" viewBox="0 0 36 36"><path fill="url(#g-obs)" d="M19 2 27 7 28 16 31 22 26 34 15 32 6 28 10 19 11 9Z"/><path fill="#cdb6f7" d="M19 2 11 9 10 19 14 21Z"/><path fill="#9670e6" d="M19 2 27 7 28 16 23 20 14 21Z"/><path fill="#5b2bb0" d="M10 19 15 24 15 32 6 28Z"/><path fill="#6e38c8" d="M15 24Q22 20 28 24L31 22 26 34 15 32Z"/></symbol>
        <symbol id="onenote" viewBox="0 0 36 36"><rect x="8" y="2" width="28" height="32" rx="1.5" fill="#ca64ea"/><path fill="#ae4bd5" d="M28 2H34.500Q36 2 36 3.500V12H28Z"/><path fill="#9332bf" d="M28 12H36V22H28Z"/><path fill="#7719aa" d="M28 22H36V32.500Q36 34 34.500 34H28Z"/><rect y="9" width="18" height="18" rx="1.5" fill="#7a1aae"/></symbol>
        <symbol id="todo" viewBox="0 0 36 36"><path fill="#1f56b8" d="M0 19 6 12 19 25 13 32Z"/><path fill="#48a4ee" d="M9 26 30 5 36 11 15 33Q13 34 12 32L9 29Z"/></symbol>
        <symbol id="notepad" viewBox="0 0 36 36"><rect x="4" y="26" width="28" height="10" rx="1.5" fill="#a8581c"/><rect x="4" y="25" width="28" height="8" fill="#f4efe8"/><path fill="#53bfdc" d="M4 4Q4 2 6 2H30Q32 2 32 4V31H4Z"/><path stroke="#0f5e78" stroke-width="2" d="M9 11H27M9 17H27M9 23H27"/><path stroke="#0f5e78" stroke-width="2.5" d="M9 0V4M15 0V4M21 0V4M27 0V4"/></symbol>
        <symbol id="chatgpt" viewBox="0 0 24 24"><path fill="#fff" d="M22.282 9.821a5.985 5.985 0 0 0-.516-4.911 6.046 6.046 0 0 0-6.51-2.9A6.065 6.065 0 0 0 4.981 4.182a5.985 5.985 0 0 0-3.998 2.9 6.046 6.046 0 0 0 .743 7.097 5.98 5.98 0 0 0 .511 4.911 6.051 6.051 0 0 0 6.515 2.9A5.985 5.985 0 0 0 13.26 24a6.056 6.056 0 0 0 5.772-4.206 5.989 5.989 0 0 0 3.998-2.9 6.056 6.056 0 0 0-.748-7.073zm-9.022 12.608a4.476 4.476 0 0 1-2.876-1.041l.142-.08 4.778-2.758a.795.795 0 0 0 .393-.681v-6.737l2.02 1.169a.071.071 0 0 1 .038.052v5.583a4.504 4.504 0 0 1-4.495 4.494zm-9.661-4.125a4.471 4.471 0 0 1-.535-3.014l.142.085 4.783 2.758a.771.771 0 0 0 .781 0l5.843-3.369v2.332a.08.08 0 0 1-.033.062L9.74 19.95a4.499 4.499 0 0 1-6.141-1.646zM2.341 7.896a4.485 4.485 0 0 1 2.366-1.973V11.6a.766.766 0 0 0 .388.677l5.814 3.354-2.02 1.169a.076.076 0 0 1-.071 0l-4.83-2.787A4.504 4.504 0 0 1 2.341 7.872zm16.596 3.856L13.104 8.364 15.119 7.2a.076.076 0 0 1 .071 0l4.83 2.791a4.494 4.494 0 0 1-.677 8.104v-5.677a.79.79 0 0 0-.407-.667zm2.011-3.023l-.142-.085-4.774-2.782a.776.776 0 0 0-.785 0L9.409 9.23V6.897a.066.066 0 0 1 .028-.062l4.83-2.787a4.499 4.499 0 0 1 6.68 4.66zM8.307 12.863l-2.02-1.164a.08.08 0 0 1-.038-.057V6.074a4.499 4.499 0 0 1 7.376-3.454l-.142.081L8.704 5.459a.795.795 0 0 0-.393.681zm1.098-2.365l2.602-1.5 2.607 1.5v2.999l-2.597 1.5-2.607-1.5Z"/></symbol>
        <symbol id="word" viewBox="0 0 36 36"><path fill="#41a5ee" d="M8 4Q8 2 10 2H34Q36 2 36 4V10H8Z"/><path fill="#2b7cd3" d="M8 10H36V18H8Z"/><path fill="#185abd" d="M8 18H36V26H8Z"/><path fill="#103f91" d="M8 26H36V32Q36 34 34 34H10Q8 34 8 32Z"/><rect y="9" width="18" height="18" rx="1.5" fill="#185abd"/></symbol>
        <symbol id="crystal" viewBox="0 0 36 36"><path fill="#6a4fd8" d="M18 2 22 4V12L28 8 32 11V15L26 18 32 21V25L28 28 22 24V32L18 34 14 32V24L8 28 4 25V21L10 18 4 15V11L8 8 14 12V4Z"/><path fill="#8ff0e8" d="M18 2 22 4V12L18 14ZM22 24V32L18 34V20ZM32 11V15L26 18 20 17ZM4 21 10 18 14 19 4 25Z"/><path fill="#a99cf2" d="M14 4 18 2V14L14 12ZM4 11 8 8 14 12 14 15ZM26 18 32 21 28 28 20 21Z"/></symbol>
        <symbol id="stripes" viewBox="0 0 36 36"><rect x="1" y="1" width="34" height="34" rx="5" fill="url(#g-red)"/><path fill="#fff" d="M8 13 18 10V14L8 17ZM8 18 29 13.500V17.500L8 22ZM18 22.500 28 20V24L18 26.500Z"/></symbol>
        <symbol id="shield" viewBox="0 0 24 24"><rect x="2" y="2" width="20" height="20" rx="1.5" fill="#1a56d0"/><path fill="#fff" d="M5.500 4H18.500V12Q18.500 17 12 20.500Q5.500 17 5.500 12Z"/><path fill="#1a56d0" d="M12 6H16.500V12Q16.500 15.500 12 18Z"/></symbol>
    </svg>
</body>
</html>
```
FILE: styles.css
```css
* {
    box-sizing: border-box;
}
body {
    margin: 0;
    height: 100vh;
    display: flex;
    flex-direction: column;
    overflow: hidden;
    background-color: #191919;
    color: #fff;
    font-family: "Segoe UI", "Open Sans", "Noto Sans", sans-serif;
    font-size: 17px;
    line-height: 24px;
    --accent: #5fb2e8;
}
button {
    display: flex;
    align-items: center;
    justify-content: center;
    padding: 0;
    border: none;
    background: none;
    color: inherit;
    font: inherit;
}
a {
    color: inherit;
    text-decoration: none;
}
svg {
    display: block;
    flex: none;
}
.sprite {
    width: 0;
    height: 0;
}
.icon {
    width: 24px;
    height: 24px;
}
.glyph {
    width: 16px;
    height: 16px;
}
.flip {
    transform: scaleX(-1);
}
.line, .bold {
    fill: none;
    stroke: currentColor;
    stroke-width: 1.5;
}
.bold {
    stroke-width: 2;
}
.line.thin {
    stroke-width: 1;
}
.line.accent {
    stroke: var(--accent);
}
.line.dim {
    opacity: 0.3;
}
.letter {
    fill: #fff;
    font-size: 14px;
    font-weight: 700;
    text-anchor: middle;
}
.off {
    color: #6b6b6b;
    --accent: #2f5670;
}

/* title bar */
.titlebar {
    display: flex;
    height: 49px;
    padding: 1px 2px 0 12px;
    background: linear-gradient(90deg, #000b0c, #010f0f 40%, #051009 85%, #000b0b);
}
.tab {
    display: flex;
    align-items: center;
    width: 360px;
    padding: 0 14px;
    border-radius: 12px 12px 0 0;
    background-color: #1b2222;
}
.tab-title {
    flex: 1;
    margin-left: 14px;
    font-weight: 600;
}
.tab-close {
    width: 36px;
    height: 36px;
}
.tab-new {
    width: 68px;
}
.window-buttons {
    display: flex;
    margin-left: auto;
}
.window-buttons button {
    width: 70px;
    height: 40px;
}

/* navigation row */
.navbar {
    display: flex;
    align-items: center;
    height: 74px;
    padding: 1px 16px 0 4px;
    border-bottom: 2px solid #3a3d3d;
    background-color: #1b2222;
    font-size: 20px;
}
.nav-button {
    width: 72px;
    height: 48px;
}
.address {
    display: flex;
    flex: 1;
    align-items: center;
    height: 49px;
    margin: 0 12px 0 10px;
    padding-left: 20px;
    border-radius: 6px;
    background-color: #272d2e;
}
.address-icon {
    width: 24px;
    height: 24px;
    margin-right: 27px;
}
.address a {
    margin: 0 27px;
}
.crumb-arrow {
    width: 12px;
    height: 16px;
}
.search {
    display: flex;
    align-items: center;
    width: 27vw;
    height: 49px;
    border-radius: 6px;
    background-color: #272d2e;
}
.search input {
    flex: 1;
    padding: 0 0 0 22px;
    border: none;
    outline: none;
    background: none;
    color: #fff;
    font: inherit;
}
.search input::placeholder {
    color: #d4d6d6;
    opacity: 1;
}
.search button {
    width: 56px;
    height: 48px;
}

/* command bar */
.toolbar {
    display: flex;
    align-items: center;
    height: 70px;
    padding-top: 3px;
    border-bottom: 2px solid #3a3a3a;
}
.tool {
    height: 48px;
    padding: 0 21px;
    gap: 11px;
}
.tool-new {
    padding: 0 22px 0 26px;
}
.tool-details {
    margin-left: auto;
    padding: 0 33px 0 0;
    gap: 12px;
}
.tool-icon {
    width: 72px;
    height: 48px;
}
.caret {
    width: 10px;
    height: 10px;
}
.divider {
    width: 2px;
    height: 48px;
    margin: 0 3px;
    background-color: #323232;
}

/* sidebar */
.main {
    display: flex;
    flex: 1;
    min-height: 0;
}
.sidebar {
    width: 238px;
    padding-top: 9px;
    border-left: 2px solid #131313;
    border-right: 2px solid #2e2e2e;
    overflow: hidden;
}
.item {
    display: flex;
    align-items: center;
    height: 48px;
    padding-left: 18px;
}
.arrow {
    width: 12px;
    height: 16px;
    margin-right: 19px;
    color: #8a8a8a;
}
.name {
    flex: 1;
    min-width: 0;
    margin-left: 5px;
    overflow: hidden;
    white-space: nowrap;
}
.pin {
    width: 18px;
    height: 18px;
    margin-right: 5px;
}
.sidebar hr {
    height: 2px;
    margin: 23px 12px 23px 14px;
    border: none;
    background-color: #363636;
}

/* drives */
.content {
    flex: 1;
    padding: 14px 0 0 12px;
}
.group {
    height: 24px;
    gap: 8px;
}
.group-arrow {
    width: 14px;
    height: 14px;
    color: #bbb;
}
.drives {
    display: flex;
    gap: 6px;
    margin: 9px 0 0 10px;
}
.drive {
    display: flex;
    width: 375px;
    height: 86px;
    padding: 6px;
    border: 1px solid transparent;
}
.focused {
    border-color: #666;
}
.drive-icon {
    width: 70px;
    height: 56px;
}
.drive-info {
    display: flex;
    flex: 1;
    flex-direction: column;
    margin-left: 8px;
    line-height: 20px;
}
.drive-info label {
    padding-left: 2px;
}
.single {
    padding: 11px 0 0 1px;
}
.free {
    margin-top: 5px;
    padding-left: 2px;
    color: #c8c8c8;
}
progress {
    width: 284px;
    height: 23px;
    margin-top: 4px;
    border: 1px solid #bcbcbc;
    background-color: #e6e6e6;
    appearance: none;
}
progress::-webkit-progress-bar {
    background-color: #e6e6e6;
}
progress::-webkit-progress-value {
    background-color: #26a0da;
}

/* status bar */
.statusbar {
    display: flex;
    align-items: center;
    height: 35px;
    padding: 0 12px 0 22px;
    background-color: #1c1c1c;
    color: #dcdcdc;
}
.status-mark {
    width: 2px;
    height: 17px;
    margin-left: 16px;
    background-color: #fff;
}
.layouts {
    display: flex;
    gap: 10px;
    margin-left: auto;
}

/* taskbar */
.taskbar {
    display: grid;
    grid-template-columns: 1fr auto 1fr;
    height: 72px;
    border-top: 2px solid #4b423e;
    background: linear-gradient(90deg, #30251f, #31261c 5%, #2f2421 30%, #332417 42%, #332417 55%, #2f2421 62%, #2f2623);
}
.apps {
    display: flex;
    grid-column: 2;
    gap: 6px;
    padding-top: 4px;
}
.app {
    position: relative;
    width: 60px;
    height: 60px;
    border-radius: 6px;
}
.app > svg {
    width: 36px;
    height: 36px;
}
.running::after {
    content: "";
    position: absolute;
    bottom: 1px;
    left: 50%;
    width: 10px;
    height: 5px;
    margin-left: -5px;
    border-radius: 3px;
    background-color: #a39c98;
}
.active {
    background-color: #3c3330;
    border: 1px solid #443c39;
}
.active::after {
    width: 24px;
    margin-left: -12px;
    background-color: #5fb8ee;
}
.alert {
    background-color: #7e4346;
}
.alert::after {
    background-color: #ff9da8;
}
.badge {
    position: absolute;
    top: 5px;
    right: 4px;
    width: 24px;
    height: 24px;
    border-radius: 50%;
    background-color: #60cdff;
    color: #000;
    text-align: center;
}
.badge svg {
    width: 24px;
    height: 24px;
}
.red {
    background-color: #c42b1c;
    color: #fff;
}
.tray {
    display: flex;
    justify-content: flex-end;
    padding: 0 30px 2px 0;
}
.tray-button {
    width: 48px;
}
.language {
    width: 66px;
}
.sound {
    width: 80px;
    gap: 12px;
}
.clock {
    gap: 12px;
    margin-left: 18px;
    text-align: right;
}
```
